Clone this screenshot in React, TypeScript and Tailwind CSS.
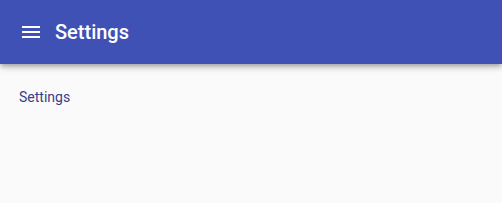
export default function App() {
  return (
    <div className="min-h-[203px] bg-[#fafafa]" style={{ fontFamily: 'Roboto, "Liberation Sans", sans-serif' }}>
      <header className="flex h-16 items-center gap-3 bg-[#3f51b5] px-[19px] text-white shadow-[0_2px_4px_-1px_rgba(0,0,0,0.2),0_4px_5px_0_rgba(0,0,0,0.14),0_1px_10px_0_rgba(0,0,0,0.12)]">
        <svg width="24" height="24" viewBox="0 0 24 24" fill="currentColor">
          <path d="M3 18h18v-2H3v2zm0-5h18v-2H3v2zm0-7v2h18V6H3z" />
        </svg>
        <h1 className="text-xl font-medium">Settings</h1>
      </header>
      <main className="px-[19px] pt-[23px]">
        <p className="text-sm text-[#36408a]">Settings</p>
      </main>
    </div>
  )
}
